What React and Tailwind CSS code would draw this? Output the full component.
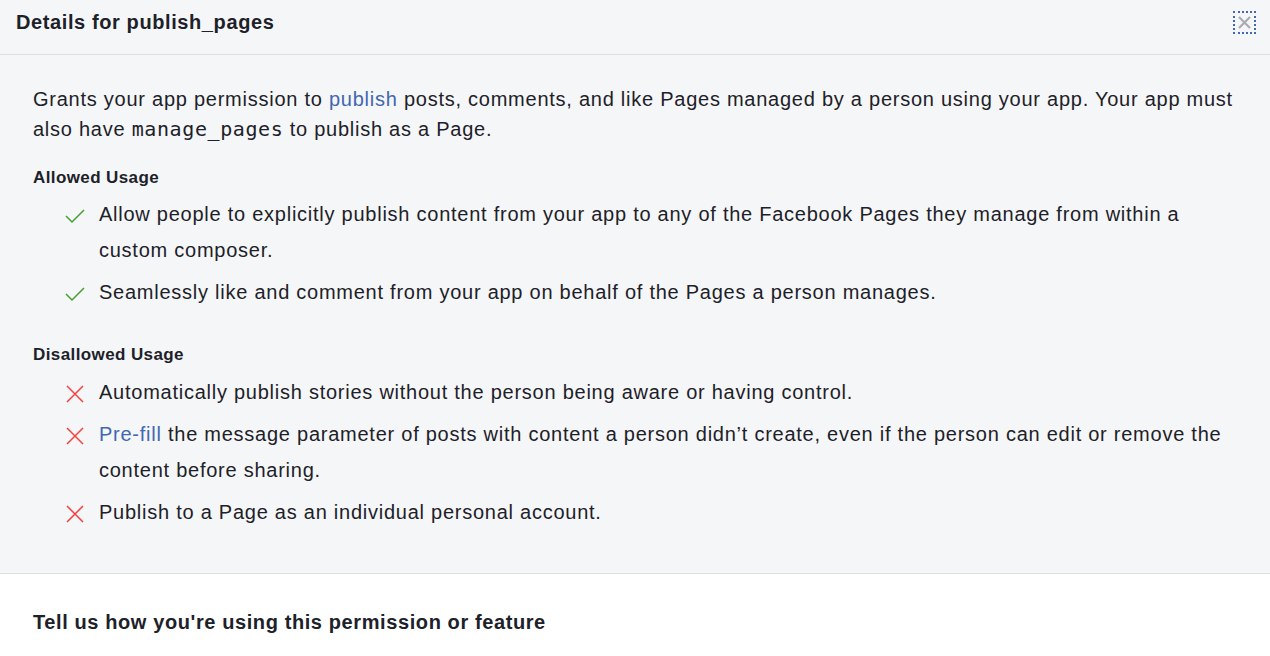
const allowed = [
  "Allow people to explicitly publish content from your app to any of the Facebook Pages they manage from within a custom composer.",
  "Seamlessly like and comment from your app on behalf of the Pages a person manages.",
];

const disallowed = [
  { text: "Automatically publish stories without the person being aware or having control." },
  { link: "Pre-fill", text: " the message parameter of posts with content a person didn’t create, even if the person can edit or remove the content before sharing." },
  { text: "Publish to a Page as an individual personal account." },
];

function Check() {
  return (
    <svg width="22" height="22" viewBox="0 0 22 22" className="shrink-0">
      <path d="M2 12 L8 18 L20 6" fill="none" stroke="#42a130" strokeWidth="1.5" />
    </svg>
  );
}

function Cross() {
  return (
    <svg width="22" height="22" viewBox="0 0 22 22" className="shrink-0">
      <path d="M3 4 L19 20 M19 4 L3 20" fill="none" stroke="#fa3e3e" strokeWidth="1.5" />
    </svg>
  );
}

function Item({ icon, children }) {
  return (
    <li className="flex items-start gap-[13px] pl-[31px]">
      <div className="pt-[8px]">{icon}</div>
      <div className="leading-[36px]">{children}</div>
    </li>
  );
}

export default function App() {
  return (
    <div className="w-[1270px] h-[656px] bg-white text-[#1d2129] font-['Liberation_Sans',Arial,sans-serif] overflow-hidden">
      <div className="bg-[#f5f6f7] border-b border-[#dddfe2] h-[55px] flex items-start justify-between pl-4 pr-[16px] pt-[9px]">
        <h1 className="text-[20px] font-bold tracking-[0.6px] leading-[26px]">Details for publish_pages</h1>
        <button className="w-[19px] h-[19px] mt-[4px] outline-2 outline-dotted outline-[#4267b2] flex items-center justify-center">
          <svg width="15" height="15" viewBox="0 0 15 15">
            <path d="M2 2 L13 13 M13 2 L2 13" stroke="#a9adb3" strokeWidth="2.2" />
          </svg>
        </button>
      </div>

      <div className="bg-[#f5f6f7] border-b border-[#dddfe2] pl-[33px] pr-[30px] pt-[29px] h-[519px] tracking-[0.75px]">
        <p className="text-[20px] leading-[30px]">
          Grants your app permission to <span className="text-[#4267b2]">publish</span> posts, comments, and like Pages managed by a person using your app. Your app must also have{" "}
          <code className="font-['DejaVu_Sans_Mono',monospace] text-[20px] tracking-[0.6px]">manage_pages</code> to publish as a Page.
        </p>

        <h2 className="text-[17px] font-bold tracking-[0.4px] mt-[21px]">Allowed Usage</h2>
        <ul className="text-[20px] mt-[5px] flex flex-col gap-[6px]">
          {allowed.map((t) => (
            <Item key={t} icon={<Check />}>{t}</Item>
          ))}
        </ul>

        <h2 className="text-[17px] font-bold tracking-[0.4px] mt-[32px]">Disallowed Usage</h2>
        <ul className="text-[20px] mt-[7px] flex flex-col gap-[6px]">
          {disallowed.map((d, i) => (
            <Item key={i} icon={<Cross />}>
              {d.link && <span className="text-[#4267b2]">{d.link}</span>}
              {d.text}
            </Item>
          ))}
        </ul>
      </div>

      <div className="pl-[33px] pt-[33px]">
        <h2 className="text-[20px] font-bold tracking-[0.6px]">Tell us how you're using this permission or feature</h2>
      </div>
    </div>
  );
}
